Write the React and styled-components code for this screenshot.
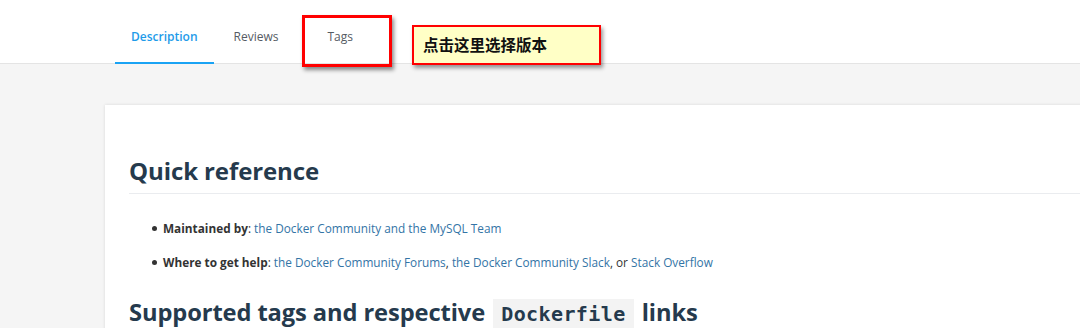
import React from "react";
import styled, { createGlobalStyle } from "styled-components";

const Global = createGlobalStyle`
  html, body { margin: 0; padding: 0; }
  body {
    width: 1080px; height: 328px; overflow: hidden;
    background: #f5f5f5;
    font-family: "Open Sans", "Noto Sans", sans-serif;
  }
`;

const Header = styled.header`
  height: 63px;
  background: #fff;
  border-bottom: 1px solid #e4e4e4;
  display: flex;
  align-items: stretch;
  padding-left: 115px;
  position: relative;
`;

const Tab = styled.div`
  position: relative;
  display: flex;
  align-items: center;
  padding: 11px ${(p) => p.$pad}px 0;
  font-size: 12px;
  font-weight: ${(p) => (p.$active ? 600 : 400)};
  color: ${(p) => (p.$active ? "#1e9be9" : "#555b63")};
  border-bottom: 2px solid ${(p) => (p.$active ? "#1aa3f4" : "transparent")};
  margin-bottom: -1px;
`;

const RedFrame = styled.div`
  position: absolute;
  left: 302px;
  top: 15px;
  width: 84px;
  height: 46px;
  border: 3px solid #f00;
  box-shadow: 2px 3px 4px rgba(0, 0, 0, 0.45);
  pointer-events: none;
`;

const Note = styled.div`
  position: absolute;
  left: 412px;
  top: 25px;
  width: 176px;
  height: 34px;
  border: 2px solid #f00;
  background: #ffffc6;
  box-shadow: 2px 3px 4px rgba(0, 0, 0, 0.4);
  display: flex;
  align-items: center;
  padding-left: 9px;
  box-sizing: content-box;
  font-family: "Noto Sans CJK SC", sans-serif;
  font-weight: 700;
  font-size: 15.5px;
  color: #111;
  padding-bottom: 2px;
`;

const Main = styled.main`
  padding: 41px 0 0 105px;
`;

const Card = styled.section`
  width: 1000px;
  min-height: 300px;
  background: #fff;
  box-shadow: 0 0 3px rgba(0, 0, 0, 0.12);
  padding: 51px 24px 0 24px;
`;

const H2 = styled.h2`
  margin: 0 0 ${(p) => p.$mb}px 0;
  font-size: ${(p) => p.$size}px;
  font-weight: 700;
  color: #253a4d;
  line-height: 1.25;
  padding-bottom: ${(p) => (p.$rule ? 7 : 0)}px;
  border-bottom: ${(p) => (p.$rule ? "1px solid #eaecef" : "none")};
  letter-spacing: -0.1px;
`;

const Code = styled.code`
  font-family: "DejaVu Sans Mono", monospace;
  font-weight: 700;
  font-size: 20px;
  letter-spacing: 0.4px;
  background: #f3f3f3;
  padding: 3px 8px 6px;
  margin: 0 2px;
  color: #253a4d;
`;

const List = styled.ul`
  margin: 0 0 27px 0;
  padding-left: 34px;
  list-style: none;
`;

const Item = styled.li`
  position: relative;
  font-size: 11.8px;
  line-height: 18px;
  color: #333;
  margin-bottom: 16px;
  &::before {
    content: "";
    position: absolute;
    left: -11px;
    top: 7px;
    width: 5px;
    height: 5px;
    border-radius: 50%;
    background: #333;
  }
`;

const Strong = styled.strong`
  font-weight: 700;
  color: #333;
`;

const A = styled.a`
  color: #3374a6;
  text-decoration: none;
`;

export default function App() {
  return (
    <>
      <Global />
      <Header>
        <Tab $active $pad={16}>Description</Tab>
        <Tab $pad={20}>Reviews</Tab>
        <Tab $pad={29}>Tags</Tab>
        <RedFrame />
        <Note>点击这里选择版本</Note>
      </Header>
      <Main>
        <Card>
          <H2 $rule $mb={25} $size={24}>Quick reference</H2>
          <List>
            <Item>
              <Strong>Maintained by</Strong>:{" "}
              <A href="#">the Docker Community and the MySQL Team</A>
            </Item>
            <Item>
              <Strong>Where to get help</Strong>:{" "}
              <A href="#">the Docker Community Forums</A>,{" "}
              <A href="#">the Docker Community Slack</A>, or{" "}
              <A href="#">Stack Overflow</A>
            </Item>
          </List>
          <H2 $mb={0} $size={23.7}>
            Supported tags and respective <Code>Dockerfile</Code> links
          </H2>
        </Card>
      </Main>
    </>
  );
}
